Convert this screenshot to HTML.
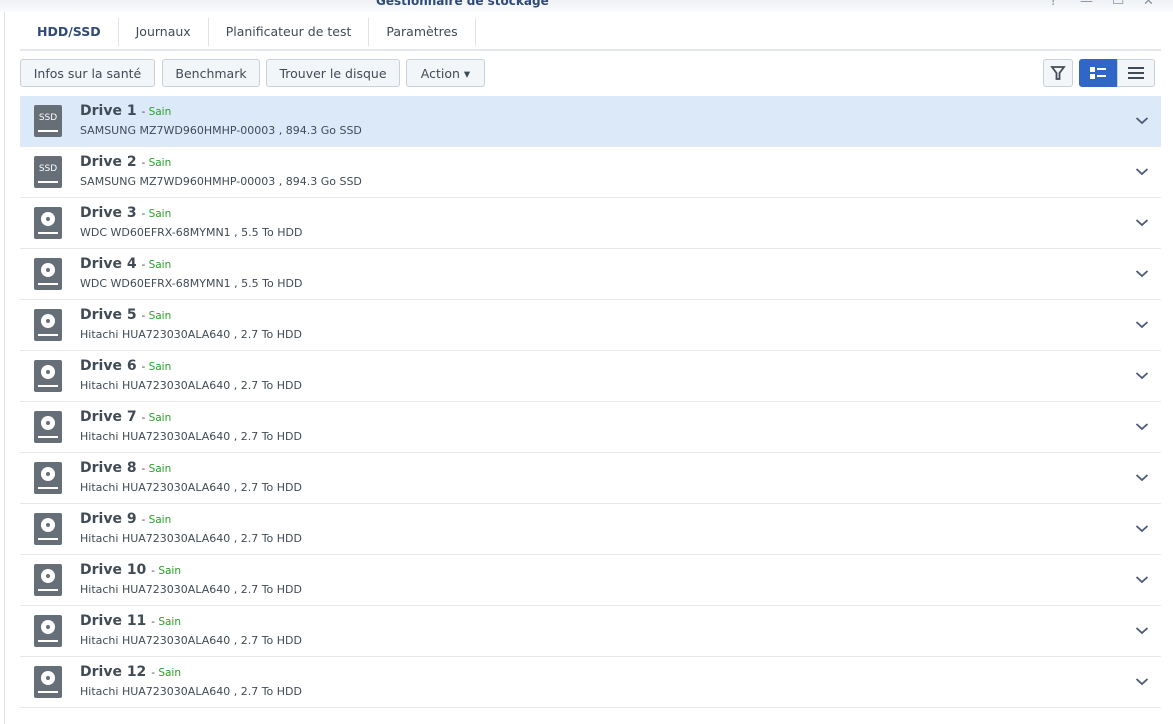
<!DOCTYPE html><html><head><meta charset="utf-8"><style>
*{box-sizing:border-box;margin:0;padding:0}
body{width:1173px;height:724px;overflow:hidden;background:#fff;font-family:"DejaVu Sans",Verdana,sans-serif;position:relative;color:#414b55}
.hdr{position:absolute;left:0;top:0;width:1173px;height:12px;background:linear-gradient(#eef1f5,#fafbfc)}
.title{position:absolute;left:376px;top:-6px;font-size:12px;font-weight:bold;color:#2e4a78}
.wc{position:absolute;top:-6px;color:#8a94a0;font-size:13px}
.lline{position:absolute;left:4px;top:12px;width:1px;height:712px;background:#dde1e6}
.tabs{position:absolute;left:20px;top:18px;height:28px;display:flex}
.tab{font-size:12.5px;padding:0 17px;line-height:27px;border-right:1px solid #dfe3e8;color:#414b55}
.tab.a{font-weight:bold;color:#2e4a78;padding:0 17px}
.tabline{position:absolute;left:20px;top:49px;width:1141px;height:2px;background:#e4e7eb}
.btn{position:absolute;top:59px;height:28px;border:1px solid #c9d0d8;border-radius:3px;background:#f3f6f9;font-size:12.5px;line-height:27px;text-align:center;color:#414b55}
.row{position:absolute;left:20px;width:1141px;height:51px;border-bottom:1px solid #e6e9ec}
.row.sel{background:#dce9f9}
.ic{position:absolute;left:14px;top:9px;width:28px;height:32px;background:#666e78;border-radius:2px}
.ic .bar{position:absolute;left:4px;bottom:5px;width:20px;height:2px;background:#fff}
.ic .ssd{position:absolute;left:0;width:28px;top:8px;text-align:center;color:#fff;font-size:9px}
.ic .disk{position:absolute;left:7px;top:5px;width:14px;height:14px;border-radius:50%;background:#fff}
.ic .disk:after{content:"";position:absolute;left:5px;top:5px;width:4px;height:4px;border-radius:50%;background:#666e78}
.nm{position:absolute;left:60px;top:7px;font-size:14px;font-weight:bold;color:#414b55}
.nm span{font-size:10.5px;font-weight:normal;color:#2aa02a}
.nm span b{color:#414b55;font-weight:normal}
.sub{position:absolute;left:60px;top:28px;font-size:11px;color:#414b55}
.chev{position:absolute;right:12px;top:20px}
</style></head><body>
<div class="hdr"></div>
<div class="title">Gestionnaire de stockage</div>
<div class="wc" style="left:1050px">?</div><div class="wc" style="left:1080px">—</div><div class="wc" style="left:1112px">▭</div><div class="wc" style="left:1143px">✕</div>
<div class="lline"></div>
<div class="tabs"><div class="tab a">HDD/SSD</div><div class="tab">Journaux</div><div class="tab">Planificateur de test</div><div class="tab">Paramètres</div></div>
<div class="tabline"></div>
<div class="btn" style="left:20px;width:135px">Infos sur la santé</div>
<div class="btn" style="left:162px;width:98px">Benchmark</div>
<div class="btn" style="left:266px;width:134px">Trouver le disque</div>
<div class="btn" style="left:406px;width:79px">Action ▾</div>
<div class="btn" style="left:1043px;width:30px;background:#f3f6f9"><svg width="16" height="16" viewBox="0 0 16 16" style="margin-top:5px"><path d="M2 2h12L9.5 8v6h-3V8z" fill="none" stroke="#414b55" stroke-width="1.8"/></svg></div>
<div class="btn" style="left:1079px;width:38px;background:#2f66c8;border-color:#2f66c8;border-radius:3px 0 0 3px"><svg width="18" height="14" viewBox="0 0 18 14" style="margin-top:6px"><rect x="1" y="1" width="5" height="5" fill="#fff"/><rect x="1" y="8" width="5" height="5" fill="#fff"/><rect x="8" y="2" width="9" height="2" fill="#fff"/><rect x="8" y="9" width="9" height="2" fill="#fff"/></svg></div>
<div class="btn" style="left:1117px;width:38px;border-radius:0 3px 3px 0"><svg width="16" height="12" viewBox="0 0 16 12" style="margin-top:7px"><rect y="0" width="16" height="2" fill="#414b55"/><rect y="5" width="16" height="2" fill="#414b55"/><rect y="10" width="16" height="2" fill="#414b55"/></svg></div>
<div id="rows"></div>
<script>
var d=[["SAMSUNG MZ7WD960HMHP-00003 , 894.3 Go SSD",1],["SAMSUNG MZ7WD960HMHP-00003 , 894.3 Go SSD",1],["WDC WD60EFRX-68MYMN1 , 5.5 To HDD"],["WDC WD60EFRX-68MYMN1 , 5.5 To HDD"]];
for(var i=0;i<8;i++)d.push(["Hitachi HUA723030ALA640 , 2.7 To HDD"]);
var h="";
d.forEach(function(r,i){h+='<div class="row'+(i==0?' sel':'')+'" style="top:'+(96+i*51)+'px"><div class="ic">'+(r[1]?'<div class="ssd">SSD</div>':'<div class="disk"></div>')+'<div class="bar"></div></div><div class="nm">Drive '+(i+1)+' <span><b>-</b> Sain</span></div><div class="sub">'+r[0]+'</div><svg class="chev" width="14" height="10" viewBox="0 0 14 10"><path d="M1.5 2l5.5 5 5.5-5" fill="none" stroke="#4a5a78" stroke-width="1.8"/></svg></div>'});
document.getElementById("rows").innerHTML=h;
</script>
</body></html>
